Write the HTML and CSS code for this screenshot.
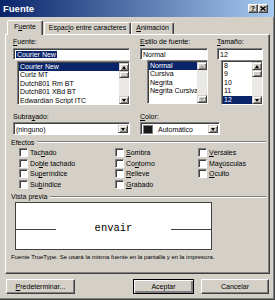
FILE: index.html
```html
<!DOCTYPE html>
<html>
<head>
    <title>Fuente</title>
    <link rel="stylesheet" href="styles.css">
</head>
<body>
<div class="window">
    <div class="titlebar">
        <span class="title">Fuente</span>
        <span class="cap-btn">?</span>
        <span class="cap-btn">
            <svg width="6" height="5" viewBox="0 0 6 5"><path d="M0.5 0.5 L5.5 4.5 M5.5 0.5 L0.5 4.5" stroke="#000" stroke-width="1.4"/></svg>
        </span>
    </div>

    <div class="tabs">
        <div class="tab active">F<u>u</u>ente</div>
        <div class="tab">Espac<u>i</u>o entre caracteres</div>
        <div class="tab"><u>A</u>nimación</div>
    </div>

    <div class="panel">
        <div class="font-row">
            <div class="col col-font">
                <label><u>F</u>uente:</label>
                <div class="field"><span class="sel-text">Courier New</span></div>
                <div class="listbox">
                    <ul>
                        <li class="selected">Courier New</li>
                        <li>Curlz MT</li>
                        <li>Dutch801 Rm BT</li>
                        <li>Dutch801 XBd BT</li>
                        <li>Edwardian Script ITC</li>
                    </ul>
                    <div class="scrollbar">
                        <span class="sb-btn"><i class="arrow up"></i></span>
                        <span class="sb-thumb"></span>
                        <span class="sb-track"></span>
                        <span class="sb-btn"><i class="arrow down"></i></span>
                    </div>
                </div>
            </div>
            <div class="col col-style">
                <label><u>E</u>stilo de fuente:</label>
                <div class="field">Normal</div>
                <div class="listbox">
                    <ul>
                        <li class="selected">Normal</li>
                        <li>Cursiva</li>
                        <li>Negrita</li>
                        <li>Negrita Cursiva</li>
                    </ul>
                    <div class="scrollbar">
                        <span class="sb-btn"><i class="arrow up off"></i></span>
                        <span class="sb-track"></span>
                        <span class="sb-btn"><i class="arrow down off"></i></span>
                    </div>
                </div>
            </div>
            <div class="col col-size">
                <label><u>T</u>amaño:</label>
                <div class="field">12</div>
                <div class="listbox">
                    <ul>
                        <li>8</li>
                        <li>9</li>
                        <li>10</li>
                        <li>11</li>
                        <li class="selected">12</li>
                    </ul>
                    <div class="scrollbar">
                        <span class="sb-btn"><i class="arrow up"></i></span>
                        <span class="sb-thumb"></span>
                        <span class="sb-track"></span>
                        <span class="sb-btn"><i class="arrow down"></i></span>
                    </div>
                </div>
            </div>
        </div>

        <div class="combo-row">
            <div class="col col-underline">
                <label>Subra<u>y</u>ado:</label>
                <div class="combo">
                    <span class="combo-text">(ninguno)</span>
                    <span class="drop-btn"><i class="arrow down"></i></span>
                </div>
            </div>
            <div class="col col-color">
                <label><u>C</u>olor:</label>
                <div class="combo">
                    <span class="swatch"></span>
                    <span class="combo-text">Automático</span>
                    <span class="drop-btn"><i class="arrow down"></i></span>
                </div>
            </div>
        </div>

        <div class="section"><span>Efectos</span><span class="rule"></span></div>
        <div class="effects">
            <div class="check"><span class="box"></span>Tac<u>h</u>ado</div>
            <div class="check"><span class="box"></span>Do<u>b</u>le tachado</div>
            <div class="check"><span class="box"></span>Su<u>p</u>eríndice</div>
            <div class="check"><span class="box"></span>Su<u>b</u>índice</div>
            <div class="check"><span class="box"></span><u>S</u>ombra</div>
            <div class="check"><span class="box"></span>Co<u>n</u>torno</div>
            <div class="check"><span class="box"></span><u>R</u>elieve</div>
            <div class="check"><span class="box"></span><u>G</u>rabado</div>
            <div class="check"><span class="box"></span><u>V</u>ersales</div>
            <div class="check"><span class="box"></span>Ma<u>y</u>úsculas</div>
            <div class="check"><span class="box"></span><u>O</u>culto</div>
        </div>

        <div class="section"><span>Vista previa</span><span class="rule"></span></div>
        <div class="preview">
            <span class="base-line"></span>
            <span class="sample">envair</span>
            <span class="base-line"></span>
        </div>
        <p class="note">Fuente TrueType. Se usará la misma fuente en la pantalla y en la impresora.</p>
    </div>

    <div class="buttons">
        <button class="btn btn-wide"><u>P</u>redeterminar...</button>
        <div class="btn-group">
            <button class="btn btn-default">Aceptar</button>
            <button class="btn btn-cancel">Cancelar</button>
        </div>
    </div>
</div>
</body>
</html>
```

FILE: styles.css
```css
* { box-sizing: border-box; }
body { margin: 0; width: 275px; height: 300px; overflow: hidden; background: #d4d0c8; font-family: "Liberation Sans", Arial, sans-serif; font-size: 7px; color: #000; }
u { text-decoration: underline; text-underline-offset: 1px; }

.window { width: 275px; height: 300px; border-right: 1px solid #404040; border-bottom: 1px solid #404040; box-shadow: inset -1px -1px #808080; }

/* title bar */
.titlebar { height: 17px; display: flex; align-items: center; padding: 0 6px 0 3px; background: linear-gradient(to right, #0a246a, #a6caf0); }
.title { flex: 1; color: #fff; font-weight: bold; font-size: 9.5px; }
.cap-btn { width: 10px; height: 9px; display: flex; align-items: center; justify-content: center; background: #d4d0c8; border: 1px solid; border-color: #fff #404040 #404040 #fff; box-shadow: inset -1px -1px #808080; font-weight: bold; font-size: 7px; line-height: 7px; }

/* tabs */
.tabs { display: flex; height: 14px; margin-top: 3px; padding-left: 7px; }
.tab { height: 12px; margin-top: 2px; padding: 0 4px; line-height: 10px; border: 1px solid; border-bottom: none; border-color: #fff #404040 transparent #fff; box-shadow: inset -1px 0 #808080; border-radius: 2px 2px 0 0; white-space: nowrap; }
.tab.active { height: 15px; margin-top: 0; padding: 1px 6px 0; margin-right: 1px; position: relative; z-index: 1; background: #d4d0c8; }

/* tab panel */
.panel { margin-left: 5px; width: 265px; height: 240px; padding: 2px 3px 0 7px; border: 1px solid; border-color: #fff #404040 #404040 #fff; box-shadow: inset -1px -1px #808080; }
.col label { display: block; height: 10px; line-height: 10px; white-space: nowrap; }

.font-row { display: flex; }
.col-font { width: 117px; margin-right: 10px; }
.col-style { width: 68px; margin-right: 9px; }
.col-size { width: 46px; }

.field, .listbox, .combo { background: #fff; border: 1px solid; border-color: #808080 #fff #fff #808080; box-shadow: inset 1px 1px #404040; }
.field { height: 12px; margin-top: 1px; padding: 1px 0 0 2px; line-height: 9px; white-space: nowrap; }
.sel-text { background: #0a246a; color: #fff; padding: 0 1px; }

.listbox { display: flex; height: 44px; margin-top: 1px; padding: 1px 0 0 1px; }
.col-font .listbox { margin-left: 4px; }
.col-style .listbox { margin-left: 7px; margin-top: 0; height: 44px; }
.col-size .listbox { margin-left: 4px; margin-top: 0; height: 45px; }
.listbox ul { flex: 1; margin: 0; padding: 0; list-style: none; overflow: hidden; }
.listbox li { height: 8.4px; line-height: 8.4px; padding-left: 1px; white-space: nowrap; overflow: hidden; }
.listbox li.selected { background: #0a246a; color: #fff; }

.scrollbar { width: 10px; display: flex; flex-direction: column; background: #ebe9e5; }
.sb-btn, .sb-thumb, .drop-btn { background: #d4d0c8; border: 1px solid; border-color: #d4d0c8 #404040 #404040 #d4d0c8; box-shadow: inset 1px 1px #fff, inset -1px -1px #808080; }
.sb-btn { height: 8px; display: flex; align-items: center; justify-content: center; }
.sb-thumb { height: 7px; }
.sb-track { flex: 1; }

.arrow { display: block; width: 0; height: 0; border-left: 2.5px solid transparent; border-right: 2.5px solid transparent; }
.arrow.up { border-bottom: 3px solid #000; }
.arrow.down { border-top: 3px solid #000; }
.arrow.up.off { border-bottom-color: #a09d96; }
.arrow.down.off { border-top-color: #a09d96; }

.combo-row { display: flex; margin-top: 7px; }
.col-underline { width: 117px; margin-right: 10px; }
.col-color { width: 80px; }
.combo { height: 13px; display: flex; align-items: center; padding: 2px 1px 1px 2px; }
.combo-text { flex: 1; white-space: nowrap; }
.swatch { width: 10px; height: 9px; margin-right: 5px; background: #1a1a1a; border: 1px solid #808080; }
.drop-btn { width: 10px; height: 100%; display: flex; align-items: center; justify-content: center; }

/* group headings */
.section { display: flex; align-items: center; height: 10px; margin: 2px 0 0 -2px; white-space: nowrap; }
.rule { flex: 1; height: 2px; margin-left: 3px; border-top: 1px solid #808080; border-bottom: 1px solid #fff; }

.effects { display: grid; grid-template-columns: 96px 83px 1fr; grid-template-rows: repeat(4, 10.6px); grid-auto-flow: column; padding-left: 6px; margin-top: 0.5px; }
.check { display: flex; align-items: center; white-space: nowrap; }
.box { width: 9px; height: 9px; margin-right: 2px; background: #fff; border: 1px solid; border-color: #808080 #fff #fff #808080; box-shadow: inset 1px 1px #404040; }

.preview { display: flex; align-items: center; justify-content: space-between; width: 197px; height: 48px; margin: 0 0 0 2px; padding-top: 4px; background: #fff; border: 1px solid #404040; }
.base-line { width: 40px; height: 1px; margin-top: 4px; background: #404040; }
.sample { font-family: "Liberation Mono", "Courier New", monospace; font-size: 10.5px; }
.note { margin: 2px 0 0 -2px; height: 10px; line-height: 10px; font-size: 6px; white-space: nowrap; }

/* dialog buttons */
.buttons { display: flex; justify-content: space-between; margin-top: 5px; padding: 0 5px 0 6px; }
.btn-group { display: flex; gap: 7px; }
.btn { height: 15px; padding: 0; font-family: inherit; font-size: 7px; color: #000; background: #d4d0c8; border: 1px solid; border-color: #fff #404040 #404040 #fff; box-shadow: inset -1px -1px #808080; }
.btn-wide { width: 69px; }
.btn-default { width: 61px; border-color: #000; box-shadow: inset 1px 1px #fff, inset -2px -2px #808080; }
.btn-cancel { width: 68px; }
```
